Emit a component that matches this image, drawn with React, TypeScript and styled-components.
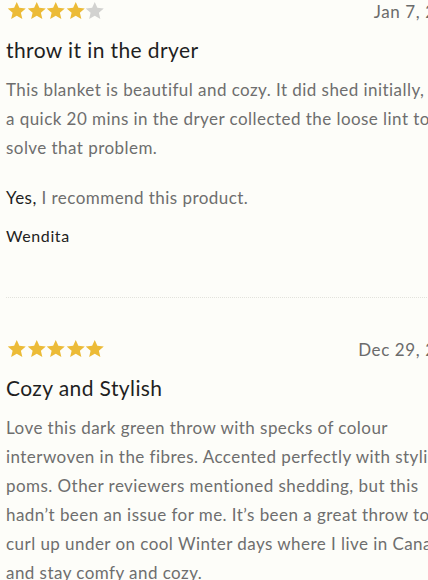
import styled, { createGlobalStyle } from "styled-components";

const GlobalStyle = createGlobalStyle`
  html, body {
    margin: 0;
    padding: 0;
    background: #fdfdf9;
    overflow: hidden;
  }
`;

type Review = {
  rating: number;
  date: string;
  title: string;
  body: string;
  recommend?: boolean;
  author?: string;
};

const reviews: Review[] = [
  {
    rating: 4,
    date: "Jan 7, 2024",
    title: "throw it in the dryer",
    body:
      "This blanket is beautiful and cozy. It did shed initially, but\na quick 20 mins in the dryer collected the loose lint to\nsolve that problem.",
    recommend: true,
    author: "Wendita",
  },
  {
    rating: 5,
    date: "Dec 29, 2023",
    title: "Cozy and Stylish",
    body:
      "Love this dark green throw with specks of colour\ninterwoven in the fibres. Accented perfectly with stylish pom\npoms. Other reviewers mentioned shedding, but this\nhadn\u2019t been an issue for me. It\u2019s been a great throw to\ncurl up under on cool Winter days where I live in Canada\nand stay comfy and cozy.",
  },
];

const Star = ({ filled }: { filled: boolean }) => (
  <StarSvg viewBox="0 0 24 24" $filled={filled}>
    <path d="M12 1.2l3.2 7.2 7.9.7-6 5.3 1.8 7.8L12 18.1 5.1 22.2l1.8-7.8-6-5.3 7.9-.7z" />
  </StarSvg>
);

const ReviewItem = ({ review, last }: { review: Review; last: boolean }) => (
  <Item $last={last}>
    <TopRow>
      <Stars>
        {[0, 1, 2, 3, 4].map((i) => (
          <Star key={i} filled={i < review.rating} />
        ))}
      </Stars>
      <DateText>{review.date}</DateText>
    </TopRow>
    <Title>{review.title}</Title>
    <Body>{review.body}</Body>
    {review.recommend && (
      <Recommend>
        <strong>Yes,</strong> I recommend this product.
      </Recommend>
    )}
    {review.author && <Author>{review.author}</Author>}
  </Item>
);

export default function App() {
  return (
    <>
      <GlobalStyle />
      <Page>
        {reviews.map((r, i) => (
          <ReviewItem key={r.title} review={r} last={i === reviews.length - 1} />
        ))}
      </Page>
    </>
  );
}

const Page = styled.div`
  width: 461px;
  padding: 1px 0 0 6px;
  font-family: Lato, "Open Sans", sans-serif;
  letter-spacing: 0.45px;
`;

const Item = styled.div<{ $last: boolean }>`
  padding-bottom: ${({ $last }) => ($last ? "0" : "49px")};
  margin-bottom: 41px;
  border-bottom: ${({ $last }) => ($last ? "none" : "1px dotted #e2e2dc")};
`;

const TopRow = styled.div`
  display: flex;
  justify-content: space-between;
  align-items: center;
  height: 20px;
`;

const Stars = styled.div`
  display: flex;
  padding-left: 1px;
`;

const StarSvg = styled.svg<{ $filled: boolean }>`
  width: 19.5px;
  height: 19.5px;
  fill: ${({ $filled }) => ($filled ? "#ecbb37" : "#d2d2d0")};
`;

const DateText = styled.span`
  font-size: 17px;
  letter-spacing: 0.6px;
  color: #6b6b6b;
`;

const Title = styled.h3`
  margin: 14px 0 0;
  font-size: 21px;
  line-height: 30px;
  font-weight: 400;
  letter-spacing: 0.4px;
  color: #1f1f1f;
`;

const Body = styled.p`
  margin: 10px 0 0;
  font-size: 17px;
  line-height: 29px;
  color: #6e6e6e;
  white-space: pre;
`;

const Recommend = styled.p`
  margin: 21px 0 0;
  font-size: 17px;
  line-height: 29px;
  color: #6e6e6e;

  strong {
    font-weight: 400;
    color: #1f1f1f;
  }
`;

const Author = styled.p`
  margin: 12px 0 0;
  font-size: 16px;
  line-height: 24px;
  font-weight: 400;
  letter-spacing: 0.6px;
  color: #222;
`;
